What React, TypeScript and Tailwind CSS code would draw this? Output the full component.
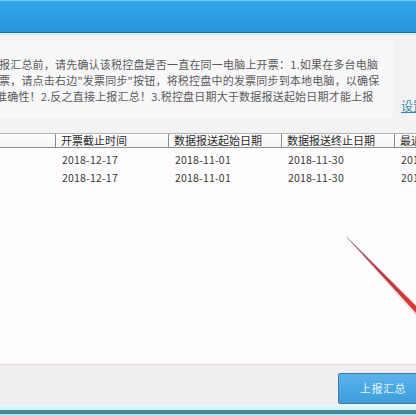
const font = { fontFamily: '"Noto Sans CJK SC", "Noto Sans", sans-serif' };

const lines = [
  '报汇总前，请先确认该税控盘是否一直在同一电脑上开票：1.如果在多台电脑',
  '票，请点击右边"发票同步"按钮，将税控盘中的发票同步到本地电脑，以确保',
  '准确性！2.反之直接上报汇总！3.税控盘日期大于数据报送起始日期才能上报',
];

const heads = ['开票截止时间', '数据报送起始日期', '数据报送终止日期', '最近'];

const rows = [
  ['2018-12-17', '2018-11-01', '2018-11-30', '2018-12-01'],
  ['2018-12-17', '2018-11-01', '2018-11-30', '2018-12-01'],
];

const App = () => (
  <div
    className="relative flex h-[416px] w-[416px] flex-col overflow-hidden bg-[#f4f2f5] text-[#4a4a4a]"
    style={font}
  >
    {/* title bar */}
    <div className="h-[33px] shrink-0 border-t-[1px] border-b-[1px] border-t-[#6cd0f4] border-b-[#2c6a86] bg-gradient-to-b from-[#34a6e8] to-[#2895dc]" />
    <div className="h-[2px] shrink-0 bg-[#c6f2fc]" />

    {/* notice */}
    <div className="flex h-[98px] shrink-0 pt-[5px]">
      <div className="h-[78px] w-[393px] shrink-0 overflow-hidden bg-[#f8f7f9] pt-[16px]">
        {lines.map((l, i) => (
          <div
            key={i}
            className={`whitespace-nowrap text-[11px] leading-[16px] tracking-[0.2px] text-[#5a5a5a] ${i === 2 ? '-ml-[4px]' : '-ml-[1px]'}`}
          >
            {l}
          </div>
        ))}
      </div>
      <div className="flex flex-1 items-end pb-[20px] pl-[8px]">
        <span className="whitespace-nowrap text-[12px] leading-[14px] text-[#2f8aa6] underline">设置</span>
      </div>
    </div>

    {/* table */}
    <div className="flex h-[231px] shrink-0 flex-col bg-[#fefcfe]">
      <div className="flex h-[15px] shrink-0 border-t border-b border-t-[#b4b4b4] border-b-[#8c8c8c] bg-gradient-to-b from-white to-[#f4f4f4]">
        <div className="w-[56px] shrink-0 border-r border-r-[#8a8a8a]" />
        {heads.map((h, i) => (
          <div
            key={i}
            className={`flex shrink-0 items-center whitespace-nowrap border-l border-l-white pl-[4px] text-[11px] leading-[13px] text-[#2a2a2a] ${i < 3 ? 'w-[113px] border-r border-r-[#8a8a8a]' : 'w-[40px]'}`}
          >
            {h}
          </div>
        ))}
      </div>
      <div className="flex flex-col pt-[3px]">
        {rows.map((r, i) => (
          <div key={i} className="flex h-[18px] items-center">
            <div className="w-[58px] shrink-0" />
            {r.map((c, j) => (
              <div
                key={j}
                className="w-[113px] shrink-0 whitespace-nowrap pl-[4px] text-[10.5px] leading-[12px] tracking-[0.2px] text-[#3a3a3a]"
              >
                {c}
              </div>
            ))}
          </div>
        ))}
      </div>
    </div>
    <div className="h-px shrink-0 bg-[#dedade]" />

    {/* footer */}
    <div className="flex h-[40px] shrink-0 justify-end bg-[#f1eef2] pt-[8px]">
      <button
        type="button"
        className="-mr-[24px] h-[31px] w-[102px] shrink-0 rounded-[2px] border border-[#3a78a8] bg-gradient-to-b from-[#5ab4ec] to-[#3d9ddc] pl-[21px] text-left text-[11px] tracking-[0.5px] text-[#e6f6ff]"
      >
        上报汇总
      </button>
    </div>
    <div className="h-[5px] shrink-0 bg-gradient-to-b from-[#e8fafd] to-[#c4f2fa]" />
    <div className="h-[4px] shrink-0 bg-[#4a8898]" />
    <div className="h-[2px] shrink-0 bg-[#a6e6f0]" />

    {/* annotation arrow */}
    <svg className="pointer-events-none absolute left-0 top-0" width="416" height="416" viewBox="0 0 416 416">
      <defs>
        <linearGradient id="ar" x1="347" y1="237" x2="416" y2="312" gradientUnits="userSpaceOnUse">
          <stop offset="0" stopColor="#7a6a78" />
          <stop offset="0.45" stopColor="#b03a4a" />
          <stop offset="1" stopColor="#d83a30" />
        </linearGradient>
      </defs>
      <polygon points="346,236 416,304 416,316 347,238" fill="#f0a0a0" opacity="0.35" />
      <polygon points="346.5,236.5 416,306 416,313 347,237.6" fill="url(#ar)" />
    </svg>
  </div>
);

export default App;
